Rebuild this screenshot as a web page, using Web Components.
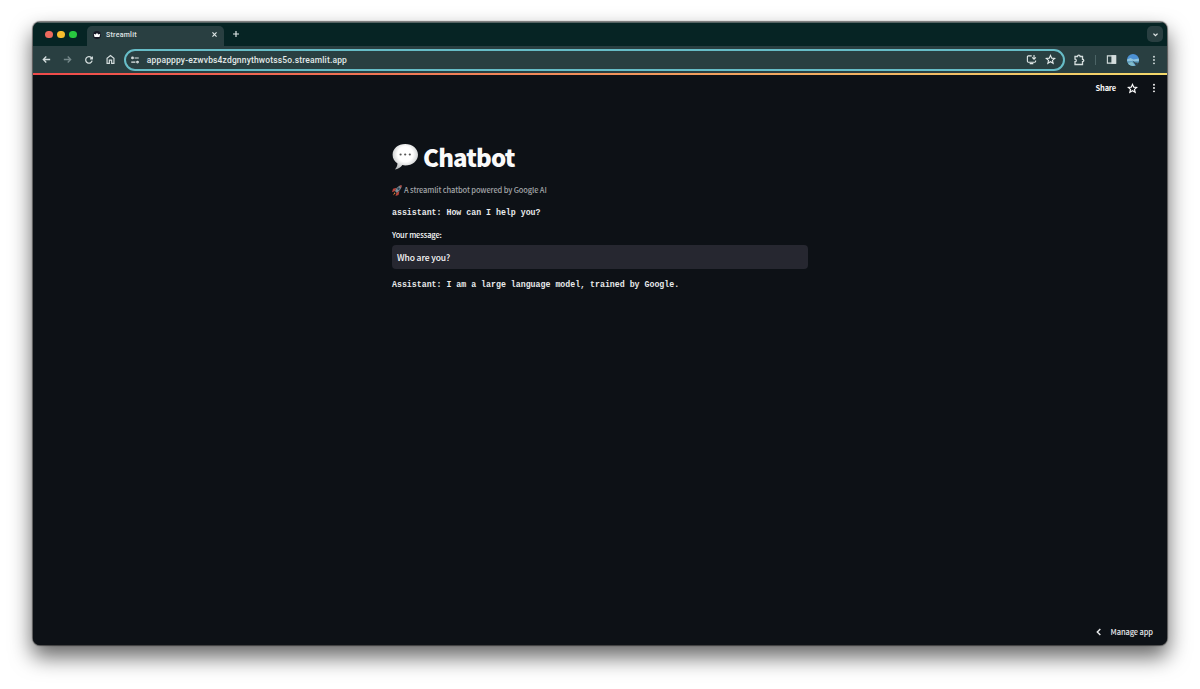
<!DOCTYPE html>
<html lang="en">
<head>
<meta charset="utf-8">
<title>Streamlit</title>
<style>
    html, body {
        margin: 0;
        height: 100%;
        overflow: hidden;
        background: #ffffff;
    }
    body {
        display: flex;
        box-sizing: border-box;
        padding: 22px 33px 44px;
        font-family: "Noto Sans CJK JP", "Open Sans", sans-serif;
    }
</style>
</head>
<body>
<browser-window>
    <tab-strip slot="tabs">
        <browser-tab>Streamlit</browser-tab>
    </tab-strip>
    <browser-toolbar slot="toolbar">appapppy-ezwvbs4zdgnnythwotss5o.streamlit.app</browser-toolbar>
    <chat-app></chat-app>
</browser-window>
<script>
const icons = {
    back: '<path d="M20 12H5M11.500 5.500L5 12l6.500 6.500"/>',
    forward: '<path d="M4 12h15M12.500 5.500L19 12l-6.500 6.500"/>',
    reload: '<path d="M19.500 13.500A7.800 7.800 0 1 1 17.800 6.800L20 9M20 3.500V9h-5.500"/>',
    home: '<path d="M4.500 20.500V9.500L12 3.500l7.500 6v11h-5v-7h-5v7z"/>',
    tune: '<path d="M11 7h10M3 17h10"/><circle cx="6" cy="7" r="2"/><circle cx="18" cy="17" r="2"/>',
    install: '<path d="M12.500 4H5a2 2 0 0 0-2 2v10a2 2 0 0 0 2 2h14a2 2 0 0 0 2-2v-2M8 21h8M17.500 2v9M13.500 7.500l4 4 4-4"/>',
    star: '<path d="M12 3l2.700 6 6.500.6-4.900 4.300 1.500 6.400L12 16.900l-5.800 3.400 1.500-6.400-4.900-4.300 6.500-.6z"/>',
    puzzle: '<path d="M4 5h5a2.600 2.600 0 0 1 5.200 0H19v5.500a2.500 2.500 0 0 1 0 5V21H4v-5.500a2.600 2.600 0 0 0 0-5.200z"/>',
    panel: '<path d="M3 4h18v16H3z"/><path d="M13 4h8v16h-8z" fill="currentColor"/>',
    dots: '<g fill="currentColor" stroke="none"><circle cx="12" cy="4" r="2.300"/><circle cx="12" cy="12" r="2.300"/><circle cx="12" cy="20" r="2.300"/></g>',
    close: '<path d="M5 5l14 14M19 5L5 19"/>',
    plus: '<path d="M12 3v18M3 12h18"/>',
    down: '<path d="M5 9l7 7 7-7"/>',
    left: '<path d="M16 3l-9 9 9 9"/>'
};

function define(name, markup) {
    const template = document.createElement('template');
    template.innerHTML = markup;
    customElements.define(name, class extends HTMLElement {
        constructor() {
            super();
            this.attachShadow({mode: 'open'}).appendChild(template.content.cloneNode(true));
        }
    });
}

// <ui-icon name="star" size="10" weight="2.4">
customElements.define('ui-icon', class extends HTMLElement {
    connectedCallback() {
        if (this.shadowRoot) return;
        const size = this.getAttribute('size') || 10;
        const weight = this.getAttribute('weight') || 2.4;
        this.attachShadow({mode: 'open'}).innerHTML = `
            <style>
                :host { display: flex; flex: none; align-items: center; justify-content: center; }
                svg { display: block; }
            </style>
            <svg width="${size}" height="${size}" viewBox="0 0 24 24" fill="none" stroke="currentColor" stroke-width="${weight}">${icons[this.getAttribute('name')]}</svg>
        `;
    }
});

define('browser-window', `
    <style>
        :host {
            display: flex;
            flex-direction: column;
            flex: 1;
            overflow: hidden;
            border-radius: 7px;
            background: #0d1116;
            box-shadow: 0 0 1px 1px rgba(0,0,0,0.5), 0 11px 21px 1px rgba(0,0,0,0.6);
        }
    </style>
    <slot name="tabs"></slot>
    <slot name="toolbar"></slot>
    <slot></slot>
`);

define('tab-strip', `
    <style>
        :host {
            display: flex;
            flex: none;
            box-sizing: border-box;
            height: 24px;
            padding: 4px 4px 0 12px;
            background: #062424;
            box-shadow: inset 0 1px 0 #566464;
            color: #e0e7e7;
        }
        .lights { display: flex; gap: 4.500px; padding-top: 4.500px; width: 42px; }
        .lights i { width: 7.500px; height: 7.500px; border-radius: 50%; }
        .new { width: 24px; height: 16px; }
        .search {
            width: 16px;
            height: 16px;
            margin-left: auto;
            border-radius: 5px;
            background: #293f41;
        }
    </style>
    <div class="lights">
        <i style="background:#ec6a5e"></i><i style="background:#f9bd2e"></i><i style="background:#28c840"></i>
    </div>
    <slot></slot>
    <ui-icon class="new" name="plus" size="8" weight="3.500"></ui-icon>
    <ui-icon class="search" name="down" size="7" weight="4.500"></ui-icon>
`);

define('browser-tab', `
    <style>
        :host {
            display: flex;
            box-sizing: border-box;
            align-items: center;
            width: 137px;
            height: 20px;
            padding: 0 6px 3px;
            border-radius: 5px 5px 0 0;
            background: #293f41;
            font: 500 7px/12px Roboto, sans-serif;
            letter-spacing: 0.25px;
        }
        svg { margin-right: 5px; }
        ui-icon { margin-left: auto; }
    </style>
    <svg width="8" height="8" viewBox="0 0 16 16">
        <circle cx="8" cy="8" r="8" fill="#171a26"/>
        <path d="M1.500 5.500L5 7l3-3 3 3 3.500-1.500L13 12H3z" fill="#fff"/>
    </svg>
    <slot></slot>
    <ui-icon name="close" size="7" weight="4"></ui-icon>
`);

define('browser-toolbar', `
    <style>
        :host {
            display: flex;
            flex: none;
            box-sizing: border-box;
            align-items: center;
            height: 27px;
            padding: 0 2.500px 0 2.500px;
            background: #293f41;
            color: #d4dddd;
        }
        .btn { width: 21.330px; }
        .off { color: #75888a; }
        .address {
            display: flex;
            box-sizing: border-box;
            align-items: center;
            flex: 1;
            height: 22px;
            margin: 0 4px 0 3.500px;
            padding: 0 7px 0 4px;
            border: 2px solid #67bdc7;
            border-radius: 11px;
            font: 500 8.500px/16px Roboto, sans-serif;
            letter-spacing: 0.15px;
            color: #e2e9e9;
        }
        .url { margin-left: 6.500px; flex: 1; white-space: nowrap; }
        .star { margin-left: 8px; }
        .line { width: 1px; height: 10px; margin: 0 5px; background: #4c6466; }
        .avatar { width: 21px; display: flex; justify-content: center; }
    </style>
    <ui-icon class="btn" name="back" size="11" weight="2.800"></ui-icon>
    <ui-icon class="btn off" name="forward" size="11" weight="2.800"></ui-icon>
    <ui-icon class="btn" name="reload" size="10" weight="3"></ui-icon>
    <ui-icon class="btn" name="home" size="11" weight="2.600"></ui-icon>
    <div class="address">
        <ui-icon name="tune" size="10" weight="2.600"></ui-icon>
        <span class="url"><slot></slot></span>
        <ui-icon name="install" size="11"></ui-icon>
        <ui-icon class="star" name="star" size="11"></ui-icon>
    </div>
    <ui-icon class="btn" name="puzzle" size="12" weight="2.600"></ui-icon>
    <span class="line"></span>
    <ui-icon class="btn" name="panel" size="11" weight="2.400"></ui-icon>
    <span class="avatar">
        <svg width="12" height="12" viewBox="0 0 24 24">
            <clipPath id="c"><circle cx="12" cy="12" r="12"/></clipPath>
            <g clip-path="url(#c)">
                <path fill="#4c91d4" d="M0 0h24v24H0z"/>
                <path fill="#8fc4dd" d="M0 11l7-3 6 3 11-2v6H0z"/>
                <path fill="#5794ac" d="M0 15h24v3H0z"/>
                <path fill="#33454b" d="M11 13l5 4 8 1v6h-6z"/>
                <path fill="#80bccb" d="M0 18l10-2 8 8H0z"/>
            </g>
        </svg>
    </span>
    <ui-icon class="btn" name="dots" size="10"></ui-icon>
`);

define('chat-app', `
    <style>
        :host {
            display: flex;
            flex-direction: column;
            flex: 1;
            background: #0d1116;
            color: #fafafa;
        }
        .decoration { height: 2px; background: linear-gradient(90deg, #ef4a4a, #f3d96b); }
        header, footer { display: flex; align-items: center; justify-content: flex-end; }
        header { height: 26px; padding-right: 8px; font: 700 7.500px/12px "Noto Sans CJK JP", sans-serif; letter-spacing: -0.2px; }
        header .star { margin-left: 11px; }
        header .dots { margin-left: 11px; }
        main { box-sizing: border-box; width: 416px; margin: 0 auto; padding-top: 39px; }
        footer {
            height: 26px;
            margin-top: auto;
            padding-right: 14px;
            gap: 8px;
            font: 500 7.500px/12px "Noto Sans CJK JP", sans-serif;
            letter-spacing: -0.1px;
            color: #e4e6e8;
        }
        h1 {
            display: flex;
            align-items: center;
            gap: 4px;
            margin: 0;
            height: 34px;
            font: 900 24px/34px "Noto Sans CJK JP", sans-serif;
        }
        h1 span { letter-spacing: -0.85px; }
        .caption {
            display: flex;
            align-items: center;
            gap: 2px;
            height: 16px;
            margin-top: 8px;
            font-size: 7.500px;
            line-height: 16px;
            font-weight: 500;
            letter-spacing: -0.125px;
            color: #a2a5a8;
        }
    </style>
    <div class="decoration"></div>
    <header>
        <span>Share</span>
        <ui-icon class="star" name="star" size="11" weight="2.600"></ui-icon>
        <ui-icon class="dots" name="dots" size="10"></ui-icon>
    </header>
    <main>
        <h1>
            <svg width="27" height="28" viewBox="0 0 27 28">
                <defs>
                    <radialGradient id="bubble" cx="50%" cy="40%" r="60%">
                        <stop offset="0.500" stop-color="#ffffff"/>
                        <stop offset="1" stop-color="#b9bcbd"/>
                    </radialGradient>
                </defs>
                <path fill="url(#bubble)" d="M13.200 1C20.400 1 26 5.600 26 11.700s-5.600 10.700-12.800 10.700c-1 0-1.900-.1-2.800-.3-1.800 2.400-4.500 4.200-7.600 4.400 1.700-1.600 2.500-3.500 2.700-6C2.400 18.500.6 15.400.6 11.700.6 5.600 6 1 13.200 1z"/>
                <g fill="#555"><circle cx="8.600" cy="11.500" r="1.100"/><circle cx="13.200" cy="11.500" r="1.100"/><circle cx="17.800" cy="11.500" r="1.100"/></g>
            </svg>
            <span>Chatbot</span>
        </h1>
        <div class="caption">
            <svg width="10" height="11" viewBox="0 0 20 20" preserveAspectRatio="none">
                <path fill="#b8443b" d="M9 5L2 7l-2 6 6-2zM15 11l-2 7-6 2 2-6z"/>
                <path fill="#7f8d95" d="M19 1c-6 0-11 5-13 10l3 3c5-2 10-7 10-13z"/>
                <path fill="#b8443b" d="M19.500.500l-5 1 4 4z"/>
                <circle cx="13" cy="7" r="2.400" fill="#26475f"/>
                <path fill="#d9823b" d="M5 13l2 2-5 4z"/>
            </svg>
            <span>A streamlit chatbot powered by Google AI</span>
        </div>
        <chat-line>assistant: How can I help you?</chat-line>
        <text-field>
            <span slot="label">Your message:</span>
            Who are you?
        </text-field>
        <chat-line>Assistant: I am a large language model, trained by Google.</chat-line>
    </main>
    <footer>
        <ui-icon name="left" size="8" weight="4.500"></ui-icon>
        <span>Manage app</span>
    </footer>
`);

define('chat-line', `
    <style>
        :host {
            display: block;
            height: 16px;
            margin-top: 7px;
            font: 700 8.260px/16px "Liberation Mono", monospace;
            white-space: nowrap;
            color: #e8eaeb;
        }
    </style>
    <slot></slot>
`);

define('text-field', `
    <style>
        :host { display: block; margin: 7px 0 8px; font-weight: 500; }
        .label { height: 14px; margin-bottom: 3px; font-size: 7.500px; line-height: 14px; letter-spacing: -0.13px; }
        .box {
            height: 24px;
            padding-left: 5px;
            border-radius: 4px;
            background: #262730;
            font-size: 8.500px;
            line-height: 24px;
            letter-spacing: -0.1px;
        }
    </style>
    <div class="label"><slot name="label"></slot></div>
    <div class="box"><slot></slot></div>
`);
</script>
</body>
</html>
